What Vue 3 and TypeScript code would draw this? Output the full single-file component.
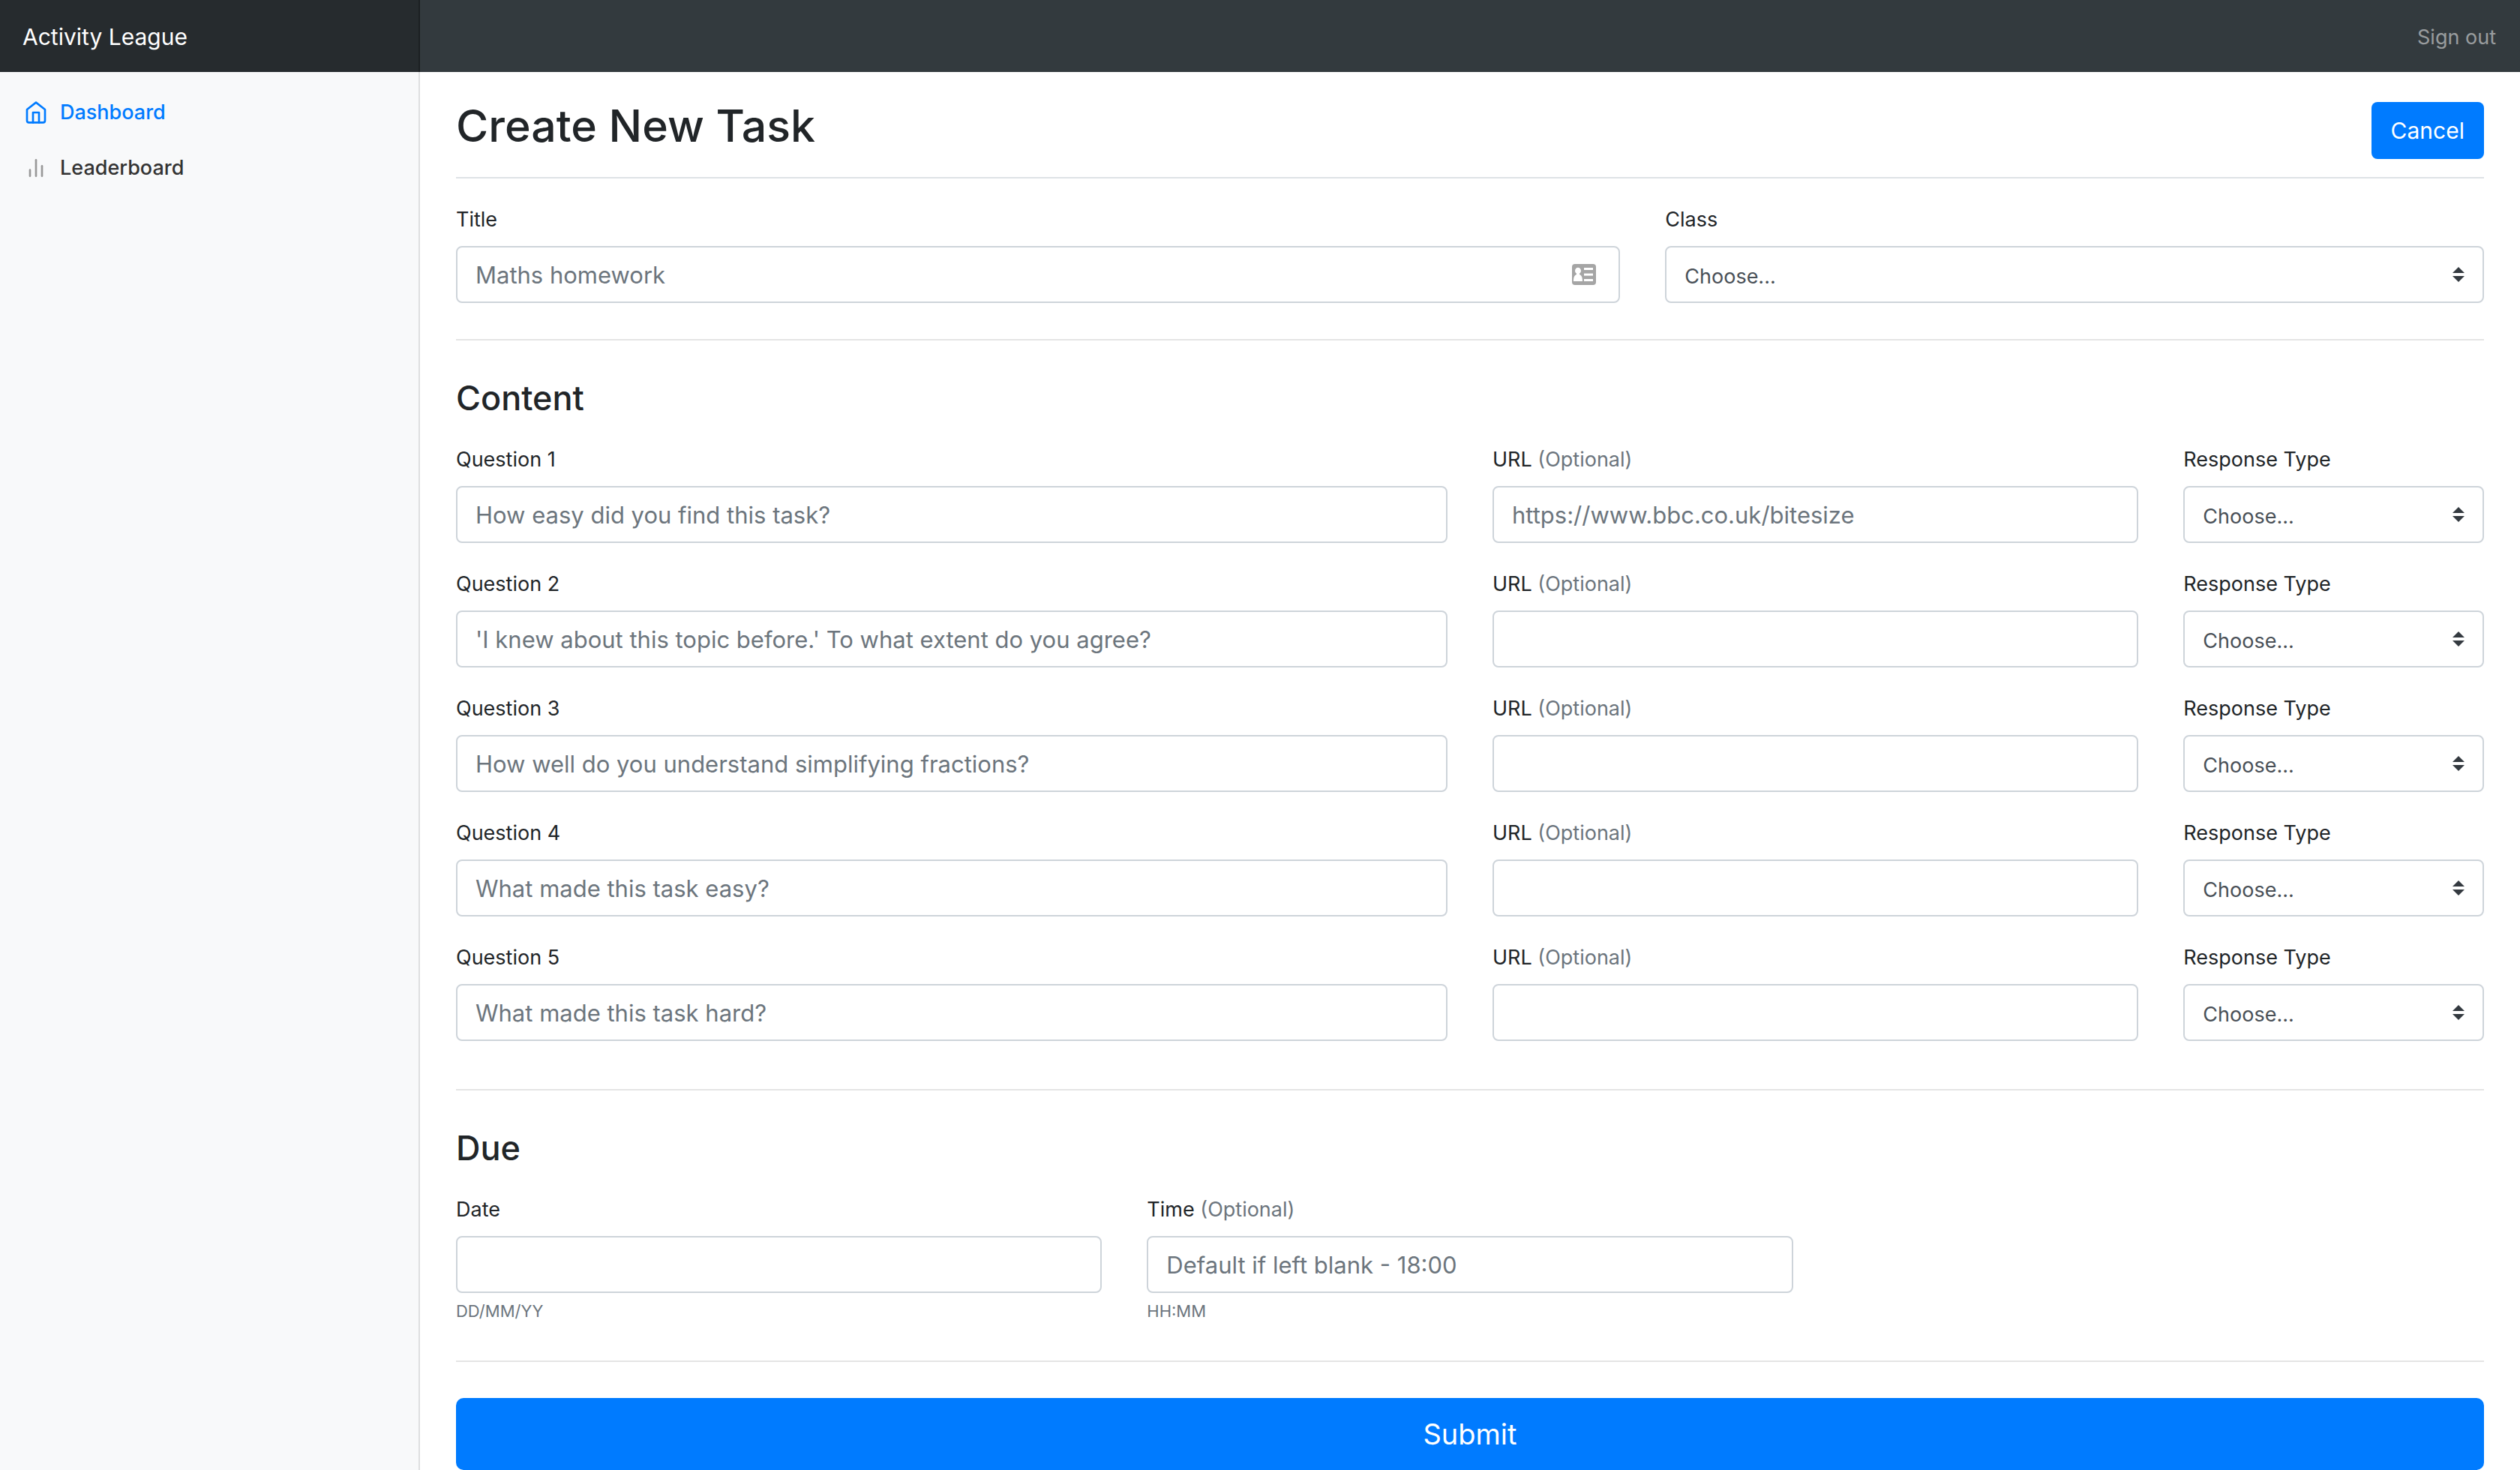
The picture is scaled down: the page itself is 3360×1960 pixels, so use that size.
<script setup lang="ts">
import { reactive } from 'vue'

interface Question {
  id: number
  placeholder: string
  urlPlaceholder: string
  text: string
  url: string
  type: string
}

const prompts: string[] = [
  'How easy did you find this task?',
  "'I knew about this topic before.' To what extent do you agree?",
  'How well do you understand simplifying fractions?',
  'What made this task easy?',
  'What made this task hard?',
]

const questions = reactive<Question[]>(
  prompts.map((placeholder, index) => ({
    id: index + 1,
    placeholder,
    urlPlaceholder: index === 0 ? 'https://www.bbc.co.uk/bitesize' : '',
    text: '',
    url: '',
    type: '',
  })),
)

const task = reactive({ title: '', group: '', date: '', time: '' })
</script>

<template>
  <div class="page">
    <header class="topbar">
      <a class="brand" href="#">Activity League</a>
      <a class="sign-out" href="#">Sign out</a>
    </header>

    <div class="body">
      <nav class="sidebar">
        <a class="nav-link active" href="#">
          <svg class="nav-icon" viewBox="0 0 24 24" aria-hidden="true">
            <path d="M3 9l9-7 9 7v11a2 2 0 0 1-2 2H5a2 2 0 0 1-2-2z" />
            <polyline points="9 22 9 12 15 12 15 22" />
          </svg>
          <span>Dashboard</span>
        </a>
        <a class="nav-link" href="#">
          <svg class="nav-icon" viewBox="0 0 24 24" aria-hidden="true">
            <line x1="18" y1="20" x2="18" y2="10" />
            <line x1="12" y1="20" x2="12" y2="4" />
            <line x1="6" y1="20" x2="6" y2="14" />
          </svg>
          <span>Leaderboard</span>
        </a>
      </nav>

      <main class="main">
        <div class="page-head">
          <h1>Create New Task</h1>
          <button class="btn cancel" type="button">Cancel</button>
        </div>

        <form @submit.prevent>
          <div class="row">
            <div class="field span-7">
              <label for="title">Title</label>
              <div class="control">
                <input id="title" v-model="task.title" type="text" placeholder="Maths homework" />
                <svg class="card-icon" viewBox="0 0 32 28" aria-hidden="true">
                  <rect width="32" height="28" rx="4" fill="#a5a5a5" />
                  <g fill="#fff">
                    <ellipse cx="8" cy="9" rx="4" ry="4.3" />
                    <path d="M6 12h4v2c3 1 4 4 4 9H2c0-5 1-8 4-9z" />
                    <rect x="16" y="5" width="12" height="3" />
                    <rect x="16" y="12.6" width="12" height="3" />
                    <rect x="16" y="20" width="12" height="3" />
                  </g>
                </svg>
              </div>
            </div>
            <div class="field span-5">
              <label for="group">Class</label>
              <div class="control">
                <select id="group" v-model="task.group">
                  <option value="">Choose...</option>
                </select>
                <svg class="arrows" viewBox="0 0 4 5" aria-hidden="true">
                  <path d="M2 0L0 2h4zm0 5L0 3h4z" />
                </svg>
              </div>
            </div>
          </div>

          <hr />

          <h2>Content</h2>
          <div class="questions">
            <div v-for="q in questions" :key="q.id" class="row">
              <div class="field span-6">
                <label :for="`question-${q.id}`">Question {{ q.id }}</label>
                <input :id="`question-${q.id}`" v-model="q.text" type="text" :placeholder="q.placeholder" />
              </div>
              <div class="field span-4">
                <label :for="`url-${q.id}`">URL <span class="muted">(Optional)</span></label>
                <input :id="`url-${q.id}`" v-model="q.url" type="text" :placeholder="q.urlPlaceholder" />
              </div>
              <div class="field span-2">
                <label :for="`type-${q.id}`">Response Type</label>
                <div class="control">
                  <select :id="`type-${q.id}`" v-model="q.type">
                    <option value="">Choose...</option>
                  </select>
                  <svg class="arrows" viewBox="0 0 4 5" aria-hidden="true">
                    <path d="M2 0L0 2h4zm0 5L0 3h4z" />
                  </svg>
                </div>
              </div>
            </div>
          </div>

          <hr />

          <h2>Due</h2>
          <div class="row">
            <div class="field span-4">
              <label for="date">Date</label>
              <input id="date" v-model="task.date" type="text" aria-describedby="date-help" />
              <div id="date-help" class="help"><small>DD/MM/YY</small></div>
            </div>
            <div class="field span-4">
              <label for="time">Time <span class="muted">(Optional)</span></label>
              <input
                id="time"
                v-model="task.time"
                type="text"
                placeholder="Default if left blank - 18:00"
                aria-describedby="time-help"
              />
              <div id="time-help" class="help"><small>HH:MM</small></div>
            </div>
          </div>

          <hr />

          <button class="btn submit" type="submit">Submit</button>
        </form>
      </main>
    </div>
  </div>
</template>

<style>
body {
  margin: 0;
  background: #fff;
}
</style>

<style scoped>
.page {
  display: flex;
  flex-direction: column;
  min-height: 100vh;
  font-family: Inter, 'Liberation Sans', sans-serif;
  font-size: 27px;
  line-height: 42px;
  color: #212528;
}

.page *,
.page {
  box-sizing: border-box;
}

a {
  text-decoration: none;
}

.topbar {
  display: flex;
  align-items: stretch;
  justify-content: space-between;
  height: 96px;
  background: #333a3e;
}

.brand {
  width: calc(100% / 6);
  padding: 25px 30px 23px;
  background: rgba(0, 0, 0, 0.25);
  box-shadow: inset -2px 0 0 rgba(0, 0, 0, 0.25);
  color: #fff;
  font-size: 30px;
  line-height: 48px;
}

.sign-out {
  padding: 29px 32px 25px;
  color: rgba(255, 255, 255, 0.5);
}

.body {
  display: flex;
  flex: 1;
}

.sidebar {
  flex: none;
  width: calc(100% / 6);
  padding-top: 17px;
  background: #f8f9fa;
  box-shadow: inset -2px 0 0 rgba(0, 0, 0, 0.1);
}

.nav-link {
  display: flex;
  align-items: center;
  gap: 16px;
  padding: 16px 32px;
  color: #333;
  font-weight: 500;
}

.nav-link.active {
  color: #007bff;
}

.nav-icon {
  width: 32px;
  height: 32px;
  fill: none;
  stroke: #999;
  stroke-width: 2;
  stroke-linecap: round;
  stroke-linejoin: round;
}

.active .nav-icon {
  stroke: currentColor;
}

.main {
  flex: 1;
  min-width: 0;
  padding: 32px 48px 0;
}

.page-head {
  display: flex;
  align-items: center;
  justify-content: space-between;
  margin-bottom: 32px;
  padding-bottom: 16px;
  border-bottom: 2px solid #dee2e6;
}

h1,
h2 {
  margin: 0;
  font-weight: 500;
}

h1 {
  padding: 2px 0 14px;
  font-size: 59px;
  line-height: 76px;
}

h2 {
  margin-bottom: 30px;
  font-size: 45px;
  line-height: 58px;
}

.btn {
  border: 0;
  border-radius: 8px;
  background: #007bff;
  color: #fff;
  font-family: inherit;
}

.cancel {
  height: 76px;
  padding: 0 26px;
  font-size: 30px;
}

.submit {
  display: block;
  width: 100%;
  height: 96px;
  border-radius: 10px;
  font-size: 38px;
}

.row {
  display: grid;
  grid-template-columns: repeat(12, minmax(0, 1fr));
  column-gap: 60px;
}

.questions {
  display: grid;
  row-gap: 32px;
  padding-bottom: 16px;
}

.span-2 {
  grid-column: span 2;
}

.span-4 {
  grid-column: span 4;
}

.span-5 {
  grid-column: span 5;
}

.span-6 {
  grid-column: span 6;
}

.span-7 {
  grid-column: span 7;
}

label {
  display: block;
  padding-top: 2px;
  margin-bottom: 14px;
}

.muted {
  color: #6c757d;
}

.control {
  position: relative;
}

input,
select {
  display: block;
  width: 100%;
  height: 76px;
  margin: 0;
  padding: 0 24px;
  border: 2px solid #ced4da;
  border-radius: 8px;
  background: #fff;
  color: #495057;
  font-family: inherit;
  font-size: 31px;
}

input::placeholder {
  color: #6c757d;
  opacity: 1;
}

select {
  appearance: none;
  padding-top: 4px;
  font-size: 27px;
}

.card-icon {
  position: absolute;
  top: 24px;
  right: 32px;
  width: 32px;
  height: 28px;
}

.arrows {
  position: absolute;
  top: 28px;
  right: 26px;
  width: 16px;
  height: 20px;
  fill: #343a40;
  pointer-events: none;
}

.help {
  height: 42px;
  padding-top: 2px;
  color: #6c757d;
}

small {
  font-size: 22px;
}

hr {
  height: 2px;
  margin: 48px 0;
  border: 0;
  background: rgba(0, 0, 0, 0.1);
}
</style>
